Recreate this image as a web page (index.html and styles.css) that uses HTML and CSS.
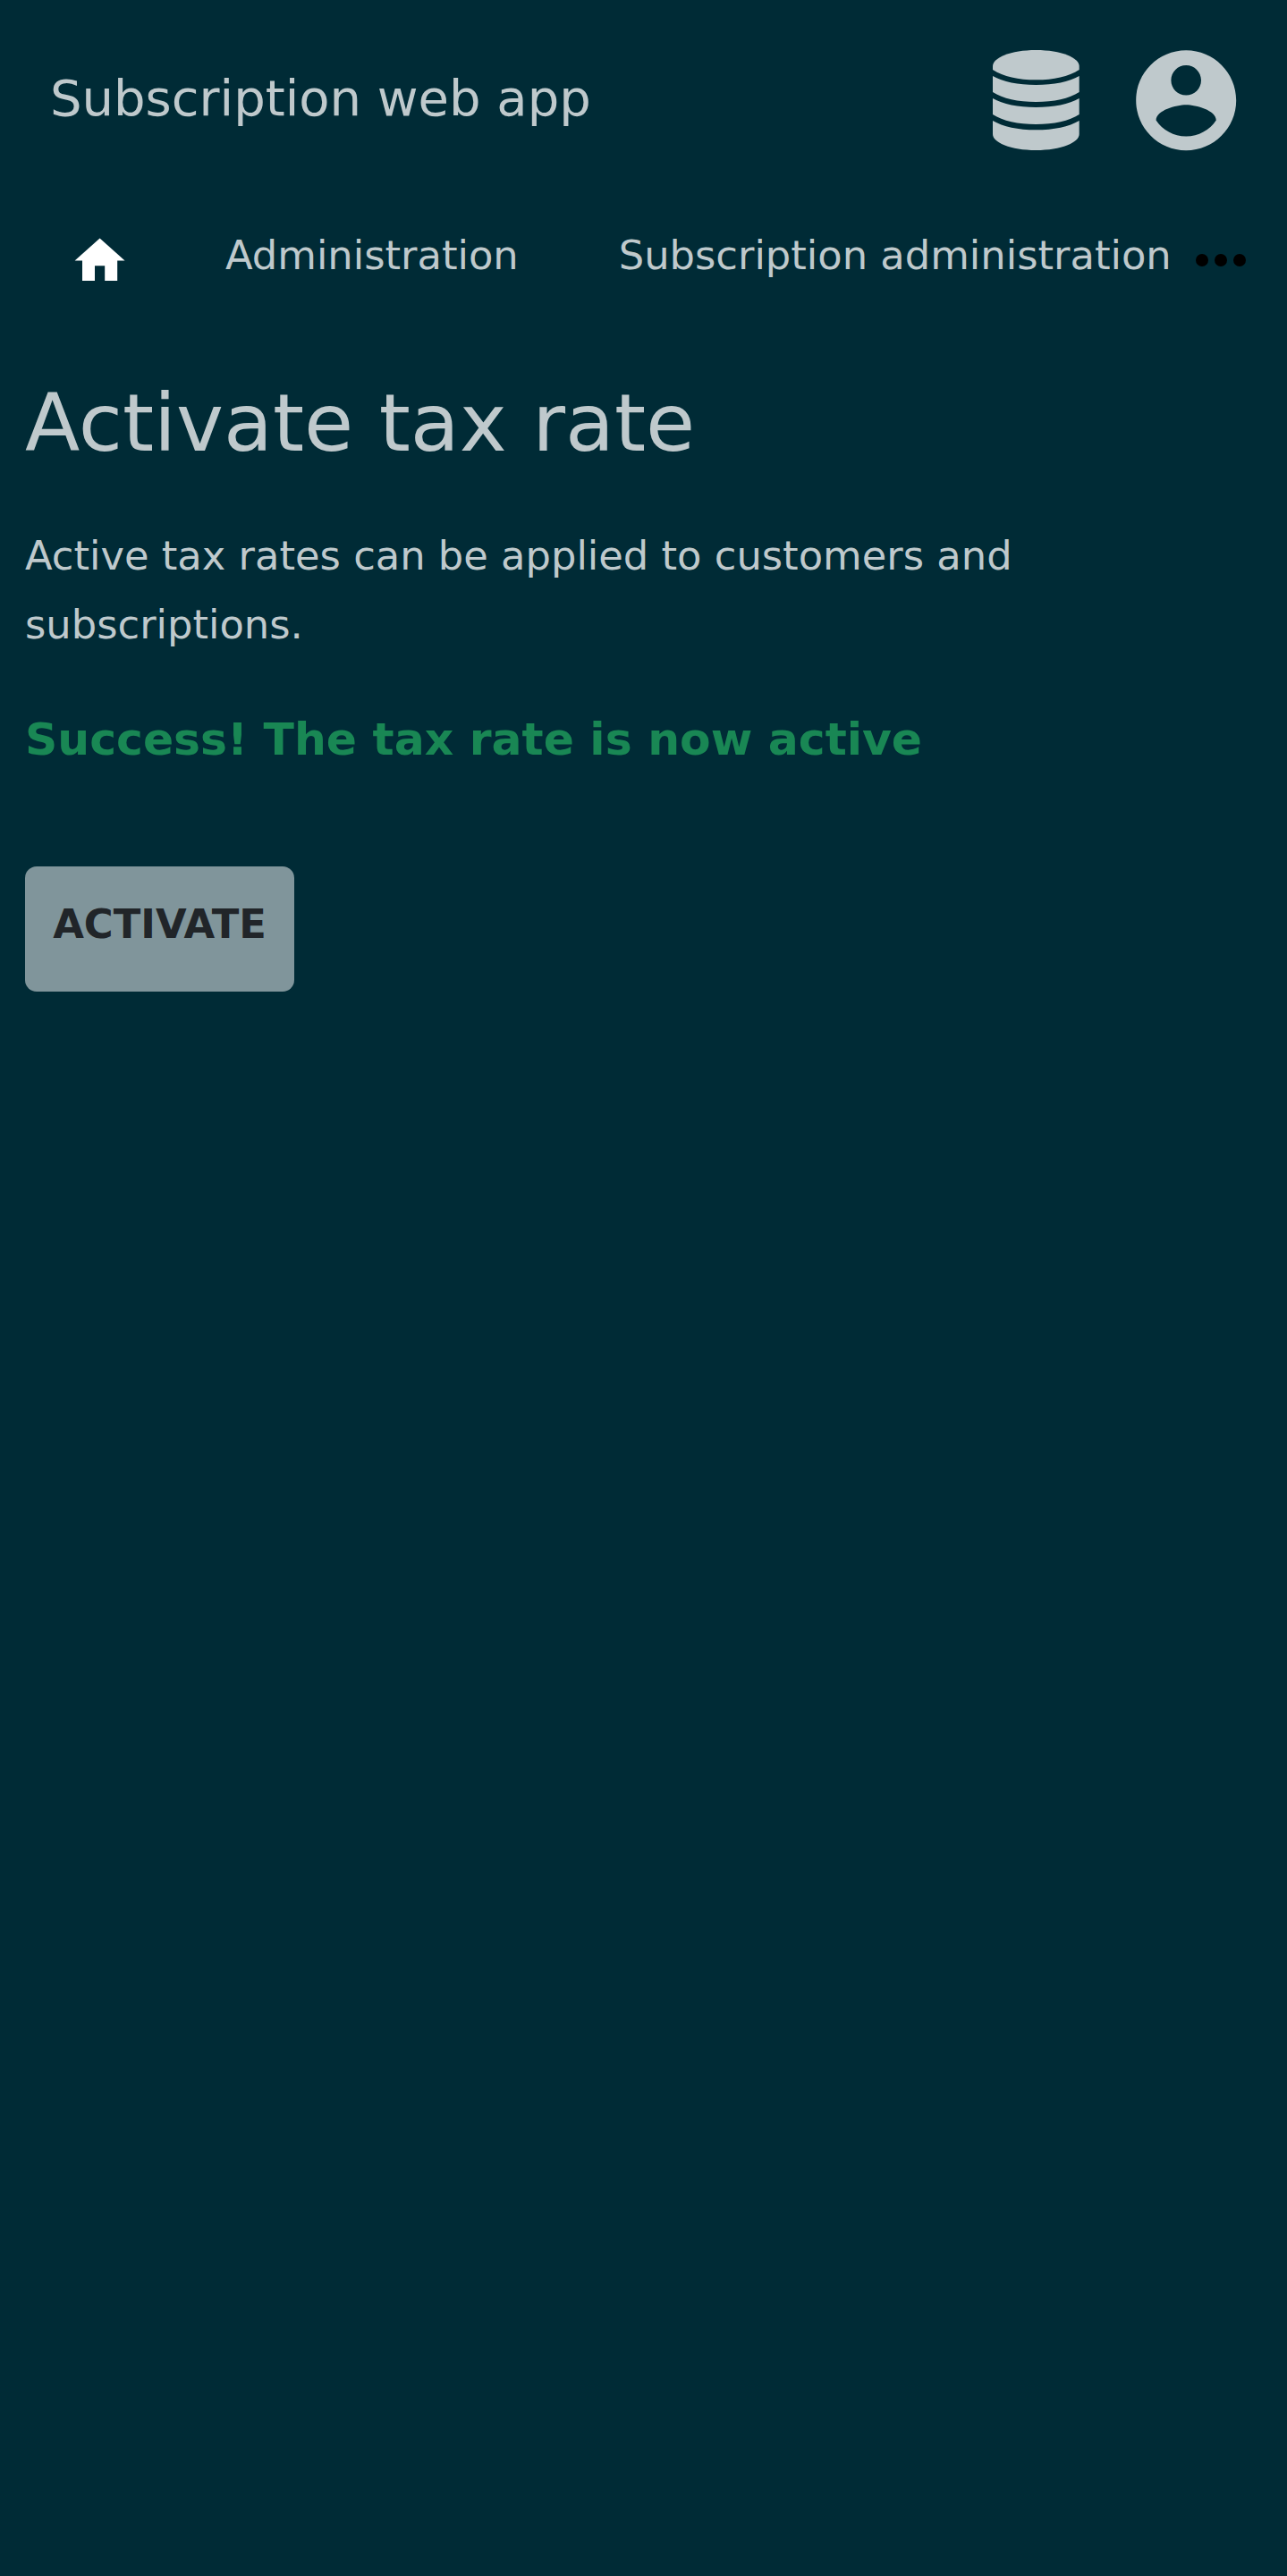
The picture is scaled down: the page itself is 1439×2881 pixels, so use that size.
FILE: index.html
```html
<!DOCTYPE html>
<html lang="en">
<head>
<meta charset="utf-8">
<title>Activate tax rate</title>
<link rel="stylesheet" href="styles.css">
</head>
<body>
<header class="topbar">
  <div class="brand">Subscription web app</div>
  <div class="actions">
    <svg class="icon-db" viewBox="0 0 290 336" fill="currentColor"><path d="M0 54C0 26 60 0 145 0s145 26 145 54v12c-36 23-85 34-145 34S36 89 0 66z"/><path d="M0 87c34 20 85 30 145 30s111-10 145-30v54c-34 22-85 33-145 33S34 163 0 141z"/><path d="M0 162c34 20 85 30 145 30s111-10 145-30v54c-34 22-85 33-145 33S34 238 0 216z"/><path d="M0 237c34 20 85 31 145 31s111-11 145-31v45c0 28-60 54-145 54S0 310 0 282z"/></svg>
    <svg class="icon-user" viewBox="0 0 24 24" fill="currentColor"><path d="M12 2C6.48 2 2 6.48 2 12s4.48 10 10 10 10-4.48 10-10S17.52 2 12 2zm0 3c1.66 0 3 1.34 3 3s-1.34 3-3 3-3-1.34-3-3 1.34-3 3-3zm0 14.2c-2.5 0-4.71-1.28-6-3.22.03-1.99 4-3.08 6-3.08 1.99 0 5.97 1.09 6 3.08-1.29 1.94-3.5 3.22-6 3.22z"/></svg>
  </div>
</header>
<nav class="nav">
  <svg class="icon-home" viewBox="0 0 24 24" fill="currentColor"><path d="M10 20v-6h4v6h5v-8h3L12 3 2 12h3v8z"/></svg>
  <a class="nav-link">Administration</a>
  <a class="nav-link nav-link-last">Subscription administration</a>
  <svg class="icon-more" viewBox="0 0 24 24"><circle cx="6" cy="12" r="2"/><circle cx="12" cy="12" r="2"/><circle cx="18" cy="12" r="2"/></svg>
</nav>
<main class="content">
  <h1 class="title">Activate tax rate</h1>
  <p class="lead">Active tax rates can be applied to customers and subscriptions.</p>
  <p class="success">Success! The tax rate is now active</p>
  <button class="button" type="button">ACTIVATE</button>
</main>
</body>
</html>
```
FILE: styles.css
```css
* { box-sizing: border-box; }
body {
  margin: 0;
  min-height: 2881px;
  background: #002b36;
  color: #bfc9cc;
  font: 44.8px/77px "DejaVu Sans", sans-serif;
}
svg { display: block; flex: none; }
.topbar {
  display: flex;
  justify-content: space-between;
  align-items: center;
  height: 224px;
  padding: 0 45.2px 0 56px;
}
.brand { font-size: 56px; padding-bottom: 5px; }
.actions { display: flex; align-items: center; gap: 52.7px; }
.icon-db { width: 96.7px; height: 112px; }
.icon-user { width: 134.4px; height: 134.4px; }
.nav {
  display: flex;
  align-items: center;
  height: 134px;
  padding-left: 78.4px;
  white-space: nowrap;
}
.icon-home { width: 67.2px; height: 67.2px; color: #fff; margin: 1.6px 106.4px 0 0; }
.nav-link { margin-right: 112px; padding-bottom: 12px; }
.nav-link-last { margin-right: 13px; }
.icon-more { width: 84px; height: 84px; fill: #000; }
.content { padding: 61px 28px 0; }
.title { margin: 0 0 56px; font-size: 89.6px; line-height: 108px; font-weight: 400; }
.lead { margin: 0 0 56px; width: 1150px; }
.success { margin: 0; font-size: 50.4px; line-height: 67px; font-weight: 700; color: #198754; }
.button {
  display: block;
  width: 301px;
  height: 140px;
  margin-top: 109px;
  padding: 0 0 11px;
  border: 0;
  border-radius: 13px;
  background: #80959b;
  color: #212529;
  font: 700 44.8px "DejaVu Sans", sans-serif;
}
```
